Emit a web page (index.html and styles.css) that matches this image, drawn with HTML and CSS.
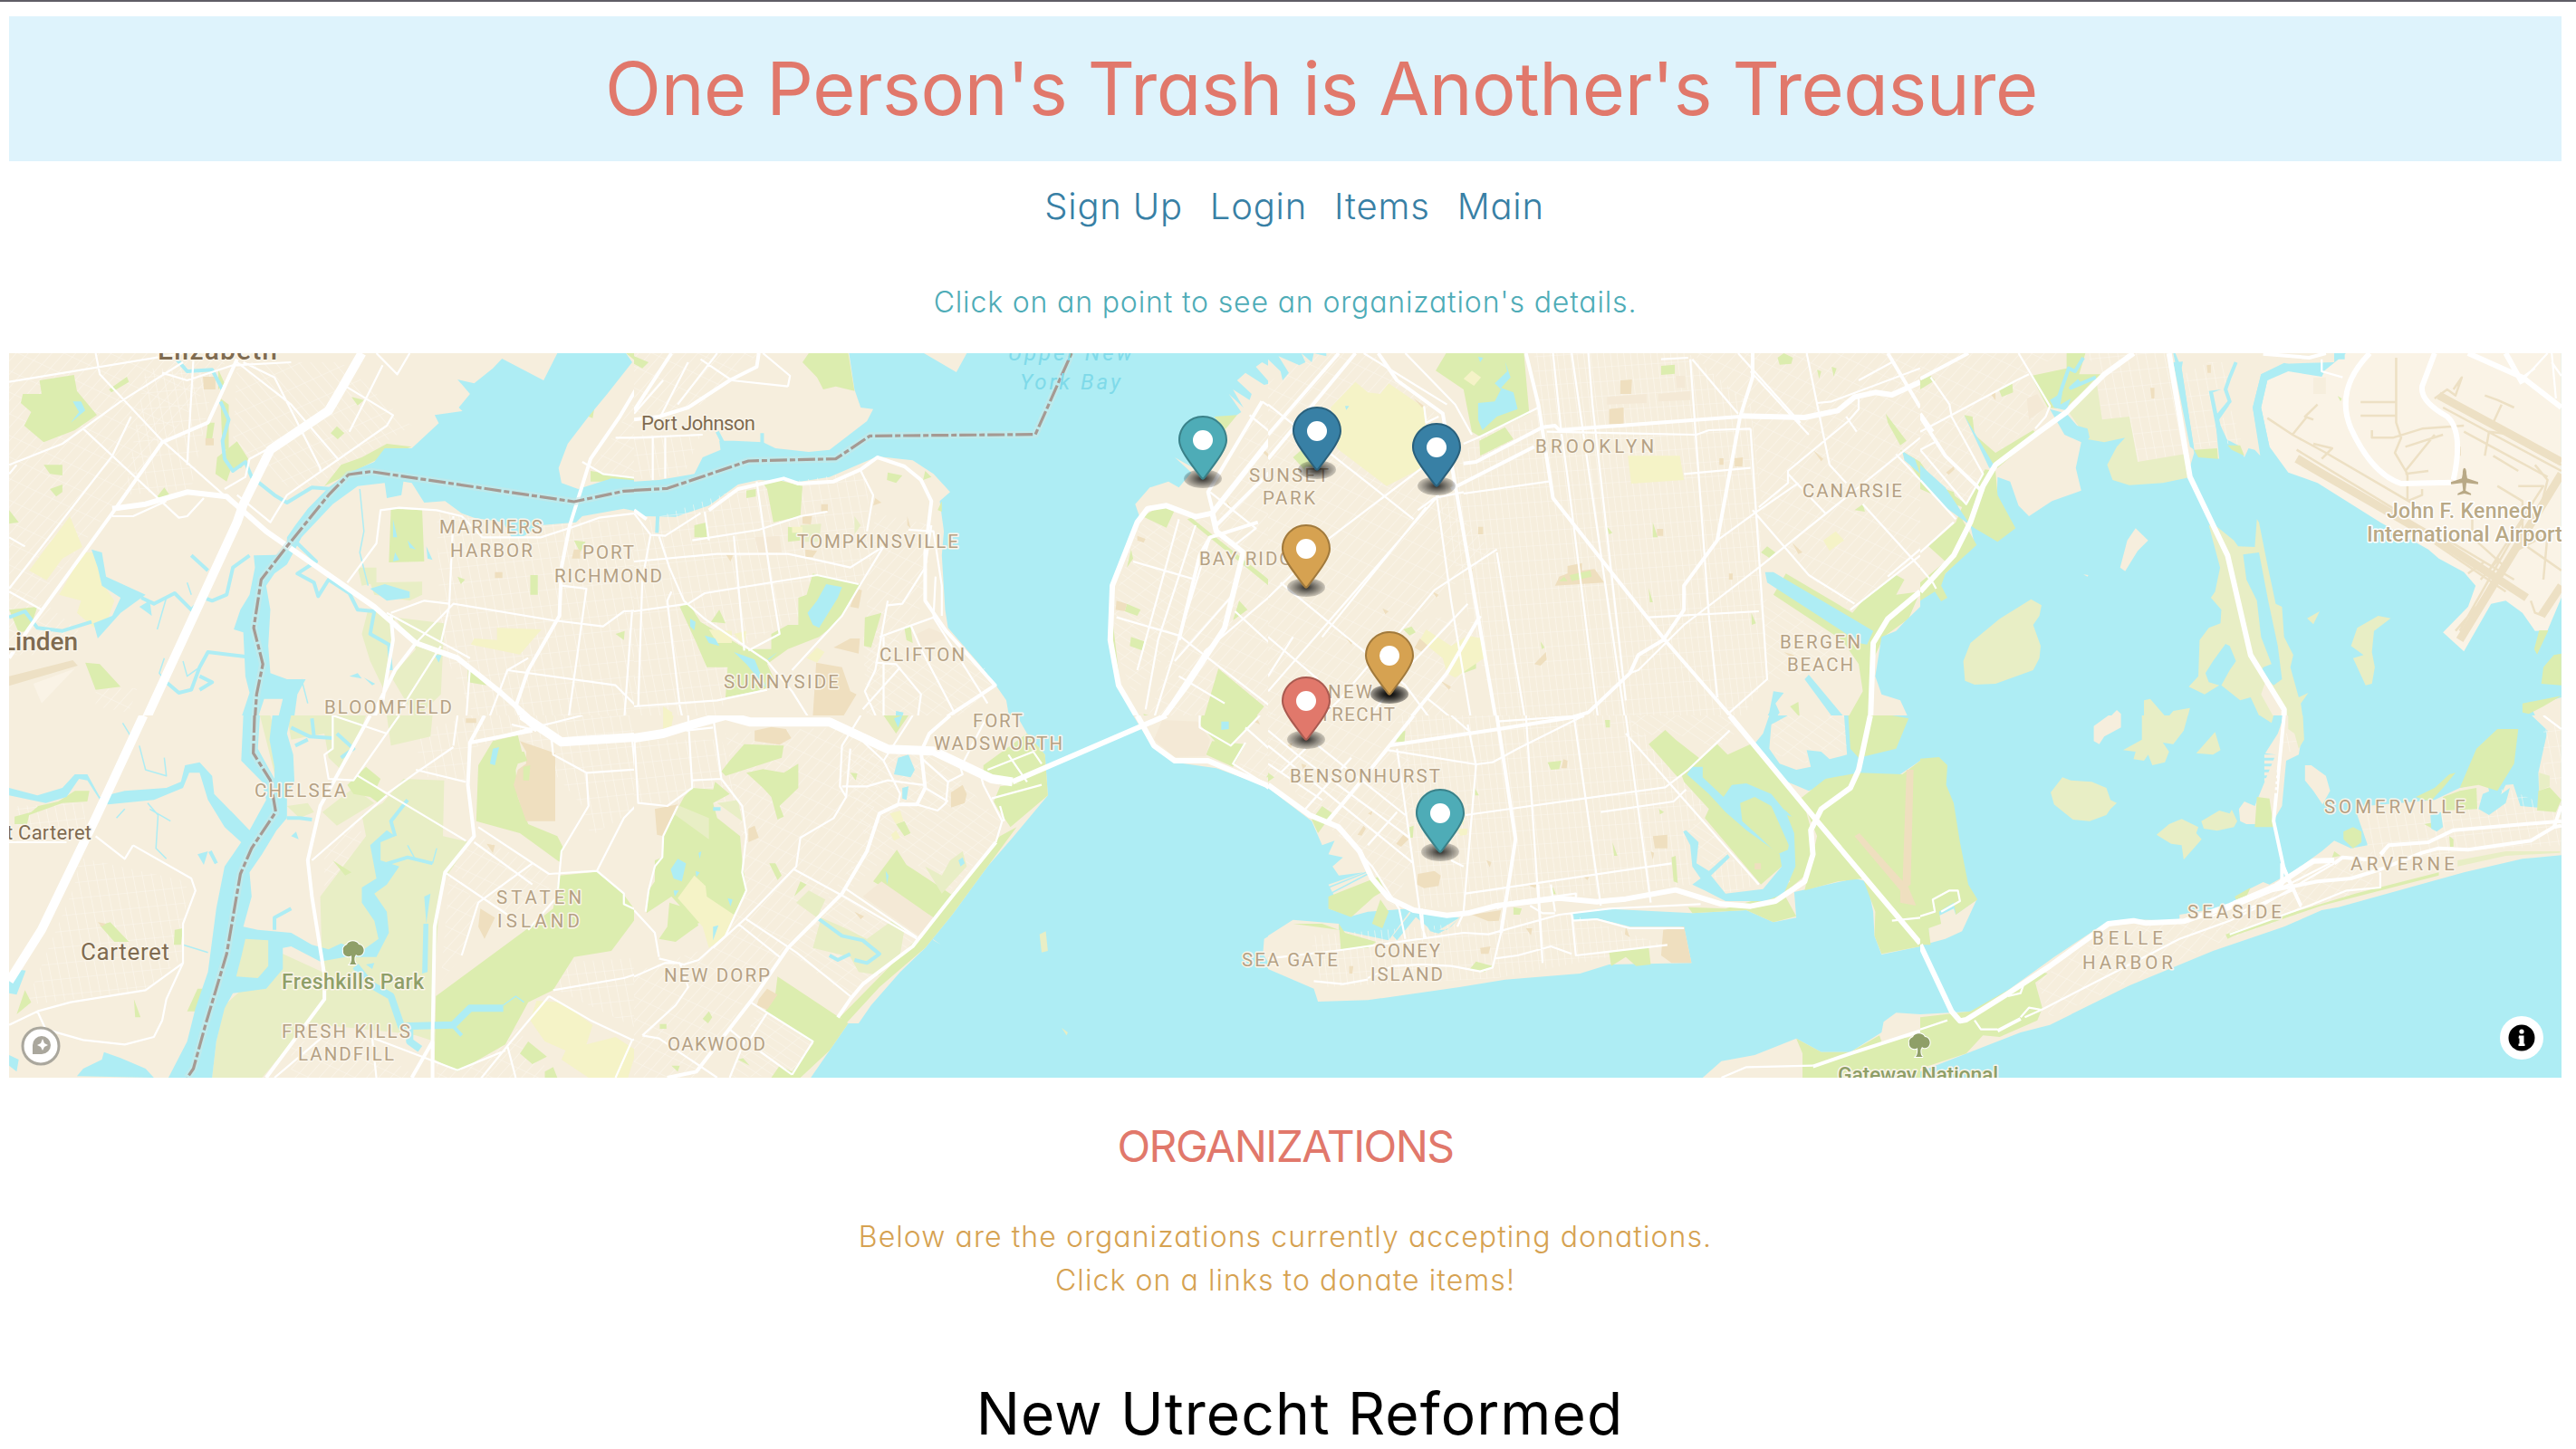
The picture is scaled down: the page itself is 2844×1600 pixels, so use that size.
FILE: index.html
```html
<!DOCTYPE html>
<html lang="en">
<head>
<meta charset="utf-8">
<title>One Person's Trash is Another's Treasure</title>
<link rel="stylesheet" href="styles.css">
</head>
<body>
<header class="banner"><h1>One Person's Trash is Another's Treasure</h1></header>
<nav class="nav"><a>Sign Up</a><a>Login</a><a>Items</a><a>Main</a></nav>
<p class="hint">Click on an point to see an organization's details.</p>
<main>
<svg class="map" viewBox="10 390 2818 800" role="img" aria-label="Map of organizations">
<defs>
<pattern id="sa" width="22" height="52" patternUnits="userSpaceOnUse" patternTransform="rotate(-8)"><path class="st" d="M0 0H22M0 0V52"/></pattern>
<pattern id="sb" width="24" height="60" patternUnits="userSpaceOnUse" patternTransform="rotate(33)"><path class="st" d="M0 0H24M0 0V60"/></pattern>
<pattern id="sc" width="16" height="48" patternUnits="userSpaceOnUse" patternTransform="rotate(-5)"><path class="st" d="M0 0H16M0 0V48"/></pattern>
<pattern id="sd" width="56" height="22" patternUnits="userSpaceOnUse" patternTransform="rotate(42)"><path class="st" d="M0 0H56M0 0V22"/></pattern>
<pattern id="se" width="24" height="62" patternUnits="userSpaceOnUse" patternTransform="rotate(-32)"><path class="st" d="M0 0H24M0 0V62"/></pattern>
<radialGradient id="shade"><stop offset="10%" stop-opacity=".75"/><stop offset="100%" stop-opacity=".18"/></radialGradient>
<symbol id="pin" viewBox="0 0 27 41">
<ellipse cx="13.5" cy="34.8" rx="10.5" ry="5.25" fill="url(#shade)"/>
<path fill="currentColor" d="M27 13.5C27 19.07 20.25 27 14.75 34.5C14.02 35.5 12.98 35.5 12.25 34.5C6.75 27 0 19.22 0 13.5C0 6.04 6.04 0 13.5 0C20.96 0 27 6.04 27 13.5Z"/>
<path fill="none" stroke="#000" stroke-opacity=".25" d="M26.5 13.5C26.5 18.8 20 26.5 14.35 34.2C13.9 34.9 13.1 34.9 12.65 34.2C7 26.5 .5 19 .5 13.5A13 13 0 0 1 26.5 13.5Z"/>
<circle cx="13.5" cy="13.5" r="5.5" fill="#fff"/>
</symbol>
<symbol id="tree" viewBox="0 0 26 28"><path stroke="#fff" stroke-width="2" paint-order="stroke" d="M9 27C11 25 11.500 21 11 17C8 20 1 17 2 12C1 8 4 6 6 5C8 0 17 0 19 5C23 5 26 10 24 14C22 18 18 18 16 16L14.500 19C14 23 15 26 17 27Z"/></symbol>
</defs>

<!-- Elizabeth and Mariners Harbor -->
<svg x="0" y="380" width="720" height="420" viewBox="0 0 1568 1260" preserveAspectRatio="none">
<path class="land" d="M0 0H1568V1260H0Z"/>
<path fill="url(#sb)" d="M22 30H560L400 320 270 540 22 960Z"/><path fill="url(#sa)" d="M350 80H520L460 480 300 500Z"/>
<path fill="url(#se)" d="M570 60L820 60 990 270 720 500 560 330Z"/><path fill="url(#sa)" d="M1050 560L1568 590V1260H1150L1060 1000Z"/><path fill="url(#sb)" d="M1568 100V440L1420 420ZM22 880L110 860 200 960 100 1030 22 1030ZM230 1140H330L310 1220 230 1200Z"/>
<path class="air" d="M80 1125L180 1075 100 1190Z"/><path class="run" d="M22 1100L175 1047 187 1065 22 1132Z"/>
<path class="yel" d="M168 570L198 672 150 710 112 782 70 750ZM200 690L235 690 245 790 275 850 255 930 225 938 185 890 195 850 142 830ZM1195 940L1302 945 1250 1028 1132 995 1140 975 1195 980Z"/>
<path class="park" d="M95 120L178 102 185 155 233 235 180 285 105 325 58 270 75 225 50 195 55 165 100 165ZM262 150L305 108 310 125 268 160ZM105 400L150 400 150 435 120 430ZM120 480L150 465 150 490 135 505ZM375 510L395 475 410 505ZM845 175L875 185 860 203ZM795 295L810 272 828 295 812 315ZM570 322L597 380 580 410 555 415 545 455 518 430 522 375ZM940 545L1015 550 1020 720 935 723ZM990 340L930 330 870 375 820 400 780 470 840 430 910 380ZM1420 455V420L1568 455ZM1505 30H1568L1550 80ZM205 1055L240 1060 290 1135 230 1145ZM22 880L90 870 70 950 45 955ZM1125 1070L1170 1130 1125 1120ZM1380 650L1408 655 1395 690ZM1275 765H1293V830H1275ZM1100 770L1118 780 1108 795ZM1480 960L1502 950 1500 980ZM1430 205L1415 240 1425 245ZM525 85L540 130 525 150ZM530 180L550 200 550 350 535 350ZM500 260H516L510 315H495ZM22 550L45 590 22 595Z"/>
<path class="wet" d="M860 740L905 740 905 790 870 800ZM890 790L1015 787 1015 830 985 850 900 830ZM885 880L950 900 940 1000 925 1150 890 1050 870 960ZM950 905L1068 925 1060 1160 1000 1240 940 1100 1000 1010ZM1150 455L1185 465 1175 530 1150 525Z"/>
<path class="tan" d="M488 108H518V150H490ZM494 312H514V335H494ZM1380 680H1395V710H1375ZM1190 755H1208V775H1190Z"/>
<path class="water" d="M1340 30L1307 120 1207 48 1185 80 1140 130 1100 117 1130 165 1103 210 1112 222 1045 235 1055 262 990 345 925 345 900 390 840 425 790 475 740 545 710 600 690 640 690 670 665 698 610 700 613 740 600 830 578 880 562 945 585 955 590 1100 600 1155 582 1230V1260H615L635 1175H680L665 1260H705L715 1160 735 1110 690 1110 650 1090 645 1000 650 880 640 800 660 760 690 730 725 640 800 530 860 470 925 460 930 510 965 500 970 455 990 460 1020 525 1070 520 1110 560 1140 575 1210 590 1230 640 1260 635 1300 600 1385 590 1400 570 1500 545 1568 565V455L1470 445 1390 480 1350 460 1343 410 1365 330 1415 240 1460 165 1520 60 1505 30ZM220 680L245 690 255 770 350 830 290 890 235 975 225 925 270 900 290 840 245 800 235 740ZM335 870L360 850 365 900ZM175 190H195L205 220 170 260 190 225ZM890 810L925 795 985 820 985 840 930 850ZM945 580L955 640 945 640ZM950 690L960 715 945 720ZM980 650L1000 680 985 675ZM1025 670L1040 715 1028 710ZM840 1100L860 1090 870 1108ZM875 1105L902 1125 895 1130ZM1045 1030L1062 1030 1055 1055Z"/>
<path class="creek" d="M425 50L450 90 510 85 535 150M530 190L550 250 535 320 540 380 560 420 590 390 605 440 660 500 690 525 750 475 800 480M22 905L60 885 90 940 150 950 220 920M600 700L560 740 545 830 510 850 490 840 460 880 420 825 370 860 340 840M590 1035L500 1020 480 1070 460 1145 430 1155 400 1120M480 1100L510 1120 480 1145M715 660L760 720 715 760 755 790 765 835 790 780 840 825 860 880 900 885 890 960 935 995 940 1080M500 750L460 700"/>
<path class="thin" d="M865 480L875 620 865 690 885 800M400 840L378 945M450 790L460 830M725 1110L740 1190M400 1120L383 1090 395 1040M440 1050L450 1100 475 1075"/>
<path class="rd" d="M22 125L440 30M22 400L150 330 290 190 440 60M230 30L240 100 390 320 555 520M40 400L22 430M315 240L270 370 22 810M200 280L430 575 450 570 490 510M570 60L700 200 815 385M585 60L660 110 770 410 770 420M820 130L945 235 930 270 690 500 650 590 570 500M985 30L955 100 905 30M920 70L840 290M465 50L450 400M390 95L450 120 560 70 700 60M22 640L60 670M22 820L100 880M640 350L600 380 590 440 540 480M1000 990L1090 860 1330 915 1450 935 1500 885 1568 880M835 790L905 660 915 550 960 542 1050 550 1110 570 1160 640 1300 640 1390 600 1440 575 1530 560 1568 600M1090 570L1080 870 1060 990M1060 1000L940 1260M930 890L1130 1040M1130 1070L1120 1260M1220 1080L1480 1130 1530 1200M1350 800L1410 810 1365 1260M1500 1260L1520 880M940 890L1020 850 1080 860M1270 1040L1220 1080 1170 1260M270 570L320 570 400 520M1480 310H1568M1400 390L1450 430 1568 450"/>
<path class="maj" d="M570 50L500 260 390 325 270 560 70 940 22 1040M1568 60L1490 240 1420 380 1370 600 1350 740 1345 900 1270 1080 1240 1200 1260 1260M1000 990L950 1080 885 1260M940 900L945 980 920 1180 890 1260"/>
<path class="hw2" d="M270 545L350 530 450 490 545 505 640 620 900 870 1000 990 1100 1040 1200 1150 1290 1260"/>
<path class="hwy" d="M870 30L820 150 790 220 650 350 585 530 570 590 345 1260"/>
<path class="glow" d="M612 1260L617 1160 632 1060 610 940 628 780 690 670 790 500 838 432 892 422 1380 522 1500 487 1568 482"/><path class="bound" d="M612 1260L617 1160 632 1060 610 940 628 780 690 670 790 500 838 432 892 422 1380 522 1500 487 1568 482"/>
</svg>

<!-- Upper New York Bay -->
<svg x="700" y="380" width="720" height="420" viewBox="0 0 1568 1260" preserveAspectRatio="none">
<path class="water" d="M0 0H1568V1260H0Z"/>
<path class="land" d="M0 30H517L530 150 545 210 575 215 560 255 470 350 420 357 340 345 310 325 240 320 205 320 208 350 165 375 145 430 60 450 0 455ZM697 30L775 93 800 30ZM0 550L25 570 100 572 180 535 250 465 300 450 400 455 470 440 585 372 670 385 720 430 760 490 735 520 745 620 740 700 748 880 755 940 830 1060 870 1130 895 1180 905 1260H0ZM1568 30H1545L1568 90 1555 95 1510 60 1495 75 1530 130 1515 135 1470 95 1450 120 1485 165 1480 185 1440 150 1465 210 1430 165 1460 225 1400 280 1340 330 1370 430 1300 375 1340 425 1310 475 1285 455 1240 475 1205 530 1215 570 1200 640 1165 740 1145 850 1143 1000 1160 1130 1220 1260H1568Z"/>
<path fill="url(#sb)" d="M0 30H300L160 200 0 240ZM580 560L715 600 700 850 560 1150 560 800ZM1480 260L1568 180V1260H1230L1410 560Z"/><path fill="url(#sa)" d="M0 300H160L120 430 0 450ZM0 600L250 480 560 420 570 760 400 900 260 1000 200 1260H0Z"/><path fill="url(#sd)" d="M1210 600L1390 580 1300 1000 1200 1160 1155 1000 1155 850ZM550 950L840 1060 860 1140 760 1260 560 1260Z"/>
<path class="park" d="M420 30H515L530 155 485 140 455 150 440 110 405 60ZM308 455L345 450 405 470 400 570 335 590 320 480ZM0 40L35 60 20 80 0 65ZM370 605L400 610 400 650 370 655ZM430 760L545 795 490 920 445 970 370 1010 320 1060 340 1120 310 1145 220 1170 225 1070 175 1070 150 990 110 870 130 855 160 920 270 1010 330 1010 330 960 370 930 395 930 395 840 415 830ZM185 920L205 880 220 925ZM555 905L595 890 570 1005 553 1000ZM610 425L645 435 630 460 608 450ZM270 485L293 480V505L270 510ZM145 600L175 590 175 640 145 640ZM1222 570L1270 535 1300 550 1280 608ZM1405 1075L1515 1200 1480 1260H1365ZM1330 580L1340 575 1540 795 1530 805ZM1455 850L1475 880 1440 915ZM1195 970L1227 985 1222 1015 1192 1000ZM1195 680L1200 710 1185 740ZM1145 850L1160 1130 1225 1250 1170 1140ZM1185 860L1218 880 1210 900 1180 885ZM1395 240L1450 235 1420 285ZM1225 1225L1260 1240 1230 1260ZM700 420L715 440 695 450ZM740 520V555L730 550ZM650 940L665 935 670 990 655 980Z"/>
<path class="wet" d="M400 600L450 595 445 655 405 655ZM530 570L545 600 530 630Z"/>
<path class="yel" d="M180 945L235 950 235 990 200 990ZM240 960L270 950 265 1000ZM415 1040L440 1005 458 1020 440 1055ZM70 1200L92 1220 90 1260H70ZM380 605H405V625H380Z"/>
<path class="tan" d="M438 1055L500 1070 520 1150 535 1160 500 1240 430 1230ZM520 975L543 975 540 1025 480 1005ZM535 810L548 815 540 875 520 870ZM405 570H428L425 597 405 595ZM412 680L440 685 430 705 412 705ZM1160 850L1185 860 1180 885 1158 880ZM1515 350L1530 370 1525 375 1513 360ZM1425 520L1435 540 1430 545ZM580 510L595 525 575 535ZM657 570L665 610 657 600ZM220 695L238 700 232 720ZM1210 635L1230 645 1225 658 1210 650ZM450 530H466V553H450Z"/>
<path class="blk" d="M680 960L710 940 745 960 750 975 690 1005ZM290 640L350 635 355 690 300 690Z"/>
<path class="water" d="M462 795L500 805 490 840 445 940 430 930 417 890 440 850ZM135 910L148 920 145 948 135 935ZM170 965L195 975 205 1000 180 990ZM240 1020L290 1045 305 1095 318 1140 300 1110 270 1060ZM320 1045L345 1020 325 1045ZM630 1215L648 1220 640 1260 628 1250Z"/><path class="creek" d="M57 565L55 625M200 290L215 330M308 295V330"/>
<path class="rd" d="M160 50L235 120 370 140M310 30L375 105 370 140M105 200L200 30M60 250L130 60M0 230L70 120M0 310L165 300M45 310V450M75 310V445M0 560L40 632 75 635 160 560M60 635L85 740 120 850 170 910 320 1050 380 1150 430 1260M170 555L180 650M140 650L300 615 400 570 465 555M295 455L330 790 350 960 275 1015M240 635L265 1015M0 720L200 695 370 695 440 715 520 740 600 670M0 885L130 860 170 825 440 765 540 795M545 420L575 500 560 620M600 670L545 795 500 900 380 1080M660 615L720 620 740 800 740 900M610 865L645 860 700 740 715 600M610 850L580 1080 555 1150 590 1260M590 970L720 905M725 770L720 905 800 1080 850 1190M580 1055L630 1060 690 1160 680 1260M665 930L690 1010 770 1220M90 820L80 850 110 1200 120 1260M0 1200L200 1180 320 1145M600 970L600 1260M640 1070L550 1210M1385 490L1495 610 1440 670M1200 720L1350 780M1160 905L1310 965 1568 1240M1310 580L1210 1080M1350 600L1260 980 1230 1210M1385 640L1250 1240M1440 830L1300 1050M1480 235L1568 335M1510 190L1568 245M1568 790L1370 1020M1445 885L1568 1040M1310 1100L1420 1190M40 630L20 780 10 1200"/>
<path class="maj" d="M90 30L0 220M300 30L295 75 230 120 130 210 60 240 0 250M0 550L30 580M180 550L250 480 360 445 395 462 480 455 545 415 585 375 650 405 690 450 715 520 700 690 700 850 750 950 790 1010 868 1130 725 1260M1510 190L1380 490 1400 600M1568 370L1400 600M1500 590L1385 640 1360 700 1310 980M1260 1260L1380 1010"/>
<path class="hw2" d="M1568 250L1390 560 1350 572 1280 535 1235 545 1210 590 1150 800 1145 980 1165 1130 1220 1260M1390 560L1400 620 1465 690 1420 940 1330 1130 1270 1240 1225 1260M130 1260L210 1240 330 1260"/>
<path class="glow" d="M0 484L80 478 275 387 485 380 567 304 965 299 1052 30"/><path class="bound" d="M0 484L80 478 275 387 485 380 567 304 965 299 1052 30"/>
</svg>

<!-- Brooklyn -->
<svg x="1400" y="380" width="720" height="420" viewBox="0 0 1568 1260" preserveAspectRatio="none">
<path class="land" d="M0 0H1568V1260H0Z"/>
<path fill="url(#sb)" d="M0 130L90 30H250L400 220 350 450 420 500 540 690 340 920 440 900 520 1000 400 1260H0Z"/><path fill="url(#sc)" d="M640 30H1010L1160 200 1180 450 1195 1110 1130 1260H550L410 510 500 300 640 250Z"/><path fill="url(#sb)" d="M1020 30H1568V700L1400 870 1300 770 1190 560 1160 220Z"/><path fill="url(#sd)" d="M1190 840L1350 960 1400 1050 1290 1090 1200 1120Z"/>
<path class="park" d="M428 30H615L628 230 510 307 490 290 470 150 403 88ZM508 320L570 275 590 315 510 370ZM1245 760L1405 890 1430 850 1510 765 1530 780 1510 830 1568 820 1540 910 1480 970 1450 1060 1455 1260H1385L1430 1150 1420 1060 1380 980 1215 830ZM1225 45L1240 30 1262 45 1258 65 1230 68ZM945 72L978 68V98L945 102ZM1485 230L1535 320 1520 335 1490 260ZM1520 350L1568 390V450ZM60 375L80 350 130 410 90 420ZM470 1050L500 1040V1075L470 1090ZM925 590L937 640H925ZM815 605L828 625 820 630ZM1185 690L1200 670 1220 690 1205 708ZM915 808L925 855H918ZM325 945L345 935 355 955 340 965ZM1162 890L1173 925 1163 930ZM1410 550L1430 530 1435 555ZM655 985L665 1005 658 1010ZM1320 85L1330 90 1325 115ZM1355 75L1367 80 1360 107ZM1255 1200L1275 1185 1278 1235Z"/>
<path class="yel" d="M210 125L240 160 270 165 290 130 375 210 385 400 285 470 165 345 170 300 150 210ZM865 370L990 370 1000 450 873 462ZM490 88L512 110 495 138 470 115ZM380 945L440 1000 480 965 515 975 525 1035 450 1105 430 1090 420 1040 365 980ZM1335 650L1365 620 1385 650 1350 685Z"/>
<path class="tan" d="M847 120L875 117 873 165 847 165ZM820 215L855 210 855 265H820ZM690 800L700 770 720 760 720 735 755 725 755 750 785 745 808 790ZM1122 378L1142 375 1140 405H1122ZM1085 378H1095V400H1085ZM505 605H517V630H505ZM935 612H950V635H935ZM365 975L385 1000 370 1020 352 1005ZM640 1060L668 1020 670 1045 655 1065ZM1310 350L1335 380 1330 388ZM1260 658L1285 690 1275 695ZM1108 760H1117V780H1108ZM480 750L492 745 488 762ZM395 820L410 830 405 840ZM275 875L290 885 282 895ZM185 970L205 985 200 995ZM415 1115L440 1135 435 1145ZM1240 1020L1265 1030 1260 1040ZM800 1230H820V1260H800ZM350 180L375 205 370 210Z"/>
<path class="blk" d="M815 175L910 165V195L815 200ZM938 165L1015 155V185L938 190ZM980 105H1003V145H983Z"/><path class="park" d="M725 765L775 750 778 770 730 785ZM700 785L712 770 720 785Z"/>
<path class="water" d="M0 50L30 90 35 120 50 95 25 40 75 70 90 60 80 30 105 60 110 30 140 40V30H0ZM505 195L545 190 560 150 545 130 575 90 570 58 583 110 560 145 590 160 600 215 550 240 515 285 505 250ZM1195 755L1215 755 1455 950 1440 995 1420 990 1380 950 1200 790ZM1568 870L1530 920 1510 950 1475 970 1460 1100 1475 1160 1520 1180 1540 1240 1568 1260ZM1300 1095L1400 1260H1370L1290 1110ZM1215 1150L1240 1155 1220 1190 1230 1220 1210 1260H1190L1205 1220ZM1525 355L1555 380 1568 430 1530 385ZM505 42L517 45 510 60ZM185 205L195 205 188 218Z"/>
<path class="rd" d="M685 30L705 290 720 440 795 1260M730 30L790 600 860 1260M770 30L780 200 860 1180M1015 50L1060 900 1080 1170M1160 280L1200 1110 1110 1220M670 290L1030 300 1060 285 1160 280M1000 430L1160 410M470 495L675 455M915 905L1180 885M360 550L400 510 470 490M1020 50L1130 230M1568 80L1355 190 1320 195M1295 30L1350 400 1390 460M1130 30L1280 260M1160 90L1300 300M1420 180V215L1395 255 1250 420 1250 460 1180 540M1275 460L1170 560 1080 650M1568 310L1180 740 1000 930 890 1080 870 1090M1250 430L1340 560M1165 550L1300 765 1410 860M1430 530L1568 740M1568 700L1400 880M1568 680L1490 770M1390 240L1415 290M0 200L350 580M410 500L0 1150M370 410L150 640 0 840M550 680L400 815 300 980M380 540L130 970M30 790L330 1130 400 1260M0 970L120 1110M300 970L170 1180 110 1260M480 860L330 1080 230 1260M550 690L620 1260M405 500L440 850 490 1260M375 205L380 260 410 240M230 30L430 200M330 30L450 200 490 300M1510 365L1568 450M650 210L505 310 470 330M945 50L1010 45M1500 60L1420 120M380 1170L460 1260M0 1100L60 970"/>
<path class="maj" d="M0 380L210 30M0 300L170 30M265 30L310 120 420 230 550 1260M470 395L500 390 660 275 690 270 700 285 1135 240M620 30L650 200 685 510 960 990 1130 1260M1165 30V110L1135 240 1080 650 1000 800V880L950 980 890 1030 870 1090 770 1220 720 1240 610 1260M440 480L640 340M510 900L430 1090 330 1260M1490 30L1568 210"/>
<path class="hw2" d="M1135 238L1290 243 1370 220 1410 175 1460 160 1500 168 1568 125M1568 820L1490 910 1455 990 1448 1260"/>
</svg>

<!-- Jamaica Bay and JFK -->
<svg x="2120" y="380" width="724" height="420" viewBox="0 0 1568 1260" preserveAspectRatio="none">
<path class="water" d="M0 0H1568V1260H0Z"/>
<path class="land" d="M0 30H605L655 360 640 430 500 450 500 280 440 270 390 315 350 230 310 215 345 300 385 325 372 410 385 485 315 520 260 570 235 535 215 455 185 440 180 640 120 600 130 665 60 760 50 790 0 850ZM610 30H990V60L870 65 815 100 795 210 813 370 800 350 785 345 775 375 760 335 725 310 715 250 740 200 705 240 715 380 655 350 625 80ZM515 610L545 650 520 685 490 752 478 740 495 650ZM410 1260H480V1225L470 1212 440 1255ZM1460 1200L1533 1170V1260H1480ZM390 763L402 765 400 770Z"/>
<path fill="url(#sb)" d="M0 30H340L250 100 300 210 200 350 120 240 140 480 90 570 0 440Z"/><path fill="url(#sa)" d="M390 30H590L635 365 520 390 500 240 437 250 420 120 440 100ZM630 100L690 60 740 60 735 140 690 155 710 330 660 350ZM710 260L745 220 770 330 730 330Z"/>
<path class="air" d="M1533 30H1018L960 95 870 85 830 120 815 210 835 340 880 425 950 460 1100 590 1215 680 1240 710 1300 755 1328 800 1310 870 1250 955 1300 1018 1365 860 1400 850 1440 890 1470 950 1500 948 1533 840Z"/>
<path class="park" d="M350 30H395L380 100 435 100 345 215 305 210 265 105 350 80ZM0 390L40 470 80 490 95 560 60 480 110 530 155 415 180 420 185 500 228 610 185 655 130 610 100 580 135 665 60 760 50 800 65 840 50 852 35 820 0 850V790L60 720 20 670 85 590 100 540 0 480ZM105 235L125 240 130 300 180 360 270 285 280 300 185 410 165 400ZM0 120L25 105 35 120 0 150ZM188 150L220 130 222 160 195 175ZM655 350L710 345 712 380 665 375ZM735 335L765 335 775 370 745 350ZM1480 948H1502L1475 1028 1468 1010ZM1533 1025V1130L1485 1125 1490 1070 1515 1030ZM1440 1190L1533 1165 1490 1200 1455 1225 1440 1220ZM998 172L1008 180 1005 190Z"/>
<path class="wet" d="M420 110L435 250 500 240 520 390 640 362 648 440 580 460 500 467 460 450 447 400 470 340 490 310 440 325 400 315 350 215ZM265 845L290 865 285 900 270 930 288 1000 285 1040 270 1080 180 1125 130 1128 107 1115 103 1050 120 990 190 910ZM690 600L710 605 750 650 760 670 800 672 805 580 810 590 830 730 850 860 865 870 870 970 892 1030 885 1070 905 1170 928 1155 910 1190 917 1260H820L790 1170 765 1180 720 1130 740 1080 755 1050 740 1000 730 993 700 1050 682 1090 690 1120 715 1130 680 1160 642 1135 665 1100 668 980 690 940 718 925 720 880 695 840 705 820 717 740ZM925 908L955 885 940 928ZM1095 900L1125 908 1085 950 1080 1020 1087 1070 1080 1125 1065 1130 1035 1040 1060 1030 1030 1000 1045 940ZM535 1260V1180L550 1175 590 1240 605 1215 645 1205 635 1260Z"/>
<path class="water" d="M772 697L780 780 805 850 815 970 840 1060 820 1070 815 1090 845 1130 865 1110 855 1000 832 850 810 690Z"/>
<path class="blk" d="M255 180L280 165 300 210 260 250Z"/><path class="land" d="M825 1120L850 1160 880 1260H855L815 1160ZM940 110H970V165H940Z"/>
<path class="tan" d="M550 145H560V180H553ZM685 70L695 68V95H687ZM168 165L180 160V185ZM62 425L80 405 82 415 68 433Z"/>
<path class="water" d="M605 60L628 58 625 80 655 350 645 340ZM870 62L965 95 960 108 880 90 830 120 815 210 835 340 815 370 795 210 815 100ZM990 30H1015V50H990ZM310 185L340 160 335 200 360 180 350 220 320 210ZM350 230L375 270 400 280 405 310 390 330 370 300ZM0 400L60 475 120 600 50 530 0 450ZM105 235L180 410 165 410ZM690 155L720 150 700 160 715 260 735 320 715 330Z"/>
<path class="creek" d="M390 45L370 90 355 80 330 180M420 110L360 145 380 120M755 60L740 110 730 150 740 190 710 240"/>
<path class="apr" d="M1138 45V260L1150 310 1135 360 1165 430 1165 520M1053 192H1138M1053 237H1138M1080 285V310H1130L1200 280 1300 270M1160 340L1250 300M830 245L890 300 970 360 1180 530M925 240L890 300M950 200L920 240 940 250M900 350L1150 560M940 330L985 345 960 380M905 370L1400 800M1230 180L1260 150 1280 170 1295 110 1275 150M1250 210L1533 420M1310 230L1533 400M1350 170L1380 185 1420 210M1390 200L1370 260M1300 290L1500 440M1350 370L1360 290 1420 300M1470 400L1500 450 1480 560M1320 560V640L1400 740M1380 470L1440 520V620M1430 470H1490L1360 750M1290 950L1450 560M1250 640L1420 780M1230 660L1400 820M1310 760L1350 720M1340 780L1385 710M1440 660L1533 750M1430 680L1500 630 1490 780M1280 950L1330 870M1460 850L1470 890 1490 900M1215 420L1160 430M1200 480V500L1165 520M1430 420L1370 370M1290 340V370M1230 300L1160 420"/>
<path class="run2" d="M1240 170L1533 390M900 380L1250 660 1450 840M1533 430L1290 980M1533 800L1485 900"/>
<path class="rd" d="M0 290L230 120 260 100M235 30L310 205 300 240 275 280M25 110L70 200 75 240 150 430 110 530 0 350 35 325M0 690L80 590M0 450L85 580M0 740L30 790 38 810M960 50V90L1010 110M1470 80L1430 120M1510 60L1533 105M1510 30L1520 180M1440 120L1500 30"/>
<path class="maj" d="M0 115L115 30M0 240L60 370 150 490M820 32L930 45 970 30M0 230L30 290"/>
<path class="hw2" d="M0 820L80 700 120 590 150 470 180 400 280 295 350 225 440 100 510 30M595 30L645 440 735 700 790 1030 870 1210V1260M1075 30Q990 150 1030 280Q1080 430 1150 462L1270 458M1230 30L1200 140Q1195 190 1260 240 1300 290 1275 450M1310 30L1440 110 1533 210M1400 30L1440 130"/>
<path class="plane" d="M1301 410Q1306 411 1306 430L1308 445 1334 457V464L1306 460 1304 485 1317 495V500L1301 495 1285 500V495L1298 485 1296 460 1269 464V457L1295 445 1297 430Q1297 411 1301 410Z"/>
</svg>

<!-- Carteret and Freshkills -->
<svg x="0" y="790" width="720" height="410" viewBox="0 0 1568 1230" preserveAspectRatio="none">
<path class="land" d="M0 0H1568V1230H0Z"/>
<path fill="url(#sa)" d="M190 470L450 550 440 800 350 910 60 960 180 560ZM40 300L200 290 210 400 40 420ZM1000 60L1130 0H1568V280L1420 400 1400 300 1250 60 1130 110 1120 220 1010 200ZM1330 820L1568 800V1060L1340 910Z"/><path fill="url(#sb)" d="M780 450L850 360 880 400 780 580ZM1080 500L1150 400 1330 530 1300 640 1200 650ZM1060 880L1080 530 1150 620 1110 800ZM1050 1100L1240 1030 1330 1200H1050ZM700 1080L880 1070 1000 1200H700Z"/>
<path class="wet" d="M625 0H650L680 150 665 220ZM690 0H880L860 80 820 180 790 140 780 60 700 80ZM930 0H1040L1035 70 940 100ZM970 210L1068 215 1065 400 1130 420 1060 560 1045 850V1080L1000 1060 950 1050 740 1020 630 1200H510L520 1080 540 960 580 910 640 890 680 790 775 850 770 600 880 400 870 330 920 290ZM690 300L740 290 755 320 720 340ZM775 320L850 240 900 290 810 365Z"/>
<path class="park" d="M1185 85L1245 65 1255 120 1240 180 1245 270 1270 360 1340 400 1355 440 1345 485 1280 420 1250 390 1145 350 1150 165ZM1345 530L1435 518 1498 590 1535 660 1470 780 1380 800 1330 910 1270 950 1215 1090 1100 1180 1045 1140 1048 930 1260 715 1330 640ZM835 230L880 170 915 210 905 240 930 265 910 290 890 270 850 260ZM92 300L140 285 180 250 215 250 210 285 150 290 70 330 65 360H35V335L75 320ZM240 695L265 685 310 750 275 750ZM420 710L440 705 435 760H418ZM475 905L492 905 480 980 450 980ZM1250 1120L1270 1080 1315 1130 1280 1155ZM800 480L845 520 830 530ZM322 940L338 1000 325 1000ZM60 910L75 950 40 990ZM1310 1180L1330 1165 1340 1200H1310Z"/>
<path class="yel" d="M1290 945L1350 950 1425 1025 1410 1090 1480 1065 1530 1110 1510 1200H1415L1350 1140 1360 1110 1310 1080 1275 1010Z"/>
<path class="tan" d="M1250 85L1335 125V350H1265L1235 230 1245 180 1265 160 1265 120ZM1155 640L1190 670 1165 740 1150 700ZM235 685L255 690 245 700ZM1170 425L1190 430 1185 455ZM1120 10H1145V25H1120Z"/>
<path class="park" d="M1240 120L1260 120 1268 150 1245 160ZM1258 170L1275 165 1272 215 1258 215Z"/>
<path class="water" d="M585 0H625L620 110 660 210 660 170 648 80 655 0H700L690 60 705 130 708 220 690 260 690 340 665 380 630 460 600 520 605 600 585 700 620 710 700 720 750 760 790 775 820 755 870 780 910 740 900 680 870 620 870 570 905 540 890 430 930 380 950 400 915 420 915 480 960 500 930 560 900 590 930 650 935 720 905 800 830 800 770 815 700 765 680 770 680 840 640 905 560 920 540 970 520 1080 510 1200H405L450 1080 470 970 500 850 520 640 540 500 580 420 540 370 500 280 480 190 455 190 440 240 370 280 260 295 240 280 210 215 190 210 160 270 110 290 22 265V240L90 265 150 240 180 195 210 195 240 270 300 250 400 240 435 220 445 165 480 155 510 200 515 260 600 380 640 280 630 220 580 150ZM185 1195L200 1170 245 1140 250 1115 290 1135 350 1170 370 1200ZM35 840L62 845 40 925 22 920V870ZM22 1125L45 1140 40 1180 22 1160ZM1185 110L1200 105 1190 165 1178 160ZM475 460L500 450 490 495ZM700 400L712 385 718 410ZM880 825L900 820 895 840ZM1020 600L1035 590 1025 690ZM1018 690H1030L1028 850 1015 855Z"/>
<path class="wet" d="M590 740L645 745 645 830 620 870 568 865 580 800Z"/>
<path class="creek2" d="M855 830L890 890 940 930 965 1030 1090 1025 1130 970 1210 970M985 1040L985 1080 1010 1105"/>
<path class="creek" d="M910 500L980 470 1040 490M950 400L940 350 980 280M520 490L505 450M700 40L745 70 800 75M755 70L750 10M710 100L740 80M810 60L850 110 820 140M690 340L720 340 750 345M660 710V670L700 640M1090 1030L1110 1060"/>
<path class="thin" d="M335 100L350 180 400 200 395 140M295 25L315 70M355 290L380 330 375 440 400 475M360 310L410 350M440 760L500 785M280 340L300 310M1210 960L1240 930 1260 950M1040 490L1050 440M1000 480L980 430"/>
<path class="rd" d="M230 400L300 475 320 430M320 430L460 540 470 580 440 690 440 820 400 940 390 1010 370 1065 300 1090 200 1075 110 1040 90 980 22 1025M440 820L350 910 170 950 90 980M800 0L930 60M800 0V110L780 130 790 210 850 215 960 0M930 265L750 480M860 200L1120 415M930 260L1000 190 1090 105M1000 180L1120 220M1090 100L1100 0M1400 0L1140 90M1325 60L1330 130 1410 190 1415 300 1350 450 1340 600 1270 710M1410 190L1568 175M1520 80L1535 290 1500 340 1435 515 1320 525 1150 370M1435 515L1500 590 1500 625 1568 670M1140 420L1280 560M1070 520L1220 660M1280 490L1150 620 1110 795M1535 290H1568M1330 910L1500 870 1568 840M1320 930L1220 1095 1140 1230M1320 930L1420 1010 1520 1075 1568 1060M1520 1075L1480 1200M1220 1095L1240 1200M895 1070L905 1200M900 1070L1100 1175 1215 1110M780 1060L660 1200M22 420H160M1230 30L1290 50"/>
<path class="maj" d="M890 0L770 300 740 480 750 600 780 860 780 940 640 1200M1250 0L1290 50M1165 0L1130 90 1125 230 1140 400 1070 520 1045 700 1040 1060V1200M1130 90L1280 50M1040 1080L990 1200"/>
<path class="hwy" d="M1255 0L1350 88 1568 68M345 0L230 340 100 710 22 880"/>
<path class="glow" d="M612 0L609 125 650 215 663 320 605 440 578 525 545 790 495 1020 465 1170 450 1200"/><path class="bound" d="M612 0L609 125 650 215 663 320 605 440 578 525 545 790 495 1020 465 1170 450 1200"/>
</svg>

<!-- New Dorp and the Narrows -->
<svg x="700" y="790" width="720" height="410" viewBox="0 0 1568 1230" preserveAspectRatio="none">
<path class="water" d="M0 0H1568V1230H0Z"/>
<path class="land" d="M0 0H920L945 60 988 130 995 265 910 405 850 500 765 660 700 770 640 850 570 960 540 1020 515 1020 470 1110 425 1200V1230H0ZM1200 0H1568V275L1500 225 1400 175 1300 155 1240 90ZM1568 700L1545 715 1515 740 1512 790 1540 850 1568 865ZM718 740L738 760 720 745Z"/>
<path fill="url(#sa)" d="M0 80H210L260 290 0 290Z"/><path fill="url(#sb)" d="M220 60L480 40 600 120 560 440 300 870 150 1200H0V850L180 770 270 500ZM1450 170L1568 20V240Z"/><path fill="url(#sd)" d="M500 130L720 120 880 350 860 430 760 580 630 440 500 600 680 740 520 940 370 780 560 430ZM300 960L430 1080 380 1190 230 1200Z"/>
<path class="park" d="M265 95L360 100 355 140 220 200 210 185 230 150ZM270 190L310 178 360 190 395 160V240L350 300 360 335 345 345 330 270 310 240ZM120 270L140 240 190 245 195 220 230 260 190 290 200 340 255 400 260 480 270 580 240 660 150 690 90 600 30 655 35 580 50 550 50 480 68 470 70 400ZM85 620L130 640 155 695 100 750 60 740 80 700ZM632 445L655 495 765 595 720 670 575 550ZM840 165L945 60 988 130 995 265 905 370 875 310 865 285 880 235 930 225 880 230 840 185ZM345 865L515 1020 470 1110 430 1085 315 980 340 920ZM435 1080L470 1110 400 1200H330L350 1160 380 1180ZM1365 0H1500L1435 100 1400 90 1360 30ZM1390 85L1470 95 1440 170 1375 130ZM920 370L850 500 765 660 700 770 590 900 510 1020 495 1000 680 740 770 580 880 400ZM600 0H660L630 60ZM630 360L650 350 665 390 650 400ZM325 490L340 490 355 530 345 545ZM385 600L400 550 415 560ZM165 1005L180 980 188 1000 178 1020ZM520 190L537 192 533 215ZM250 1140L262 1135 278 1160ZM90 1160L110 1160 105 1180ZM1520 205L1528 190 1540 205ZM62 1022H78V1038H62Z"/>
<path class="wet" d="M90 320L110 300 180 340 180 410ZM200 290L250 280 260 350ZM700 500L740 530 760 480 790 450 800 500 740 590ZM420 580L460 610 440 670 390 620ZM450 670L500 700 560 740 620 680 650 710 640 790 590 860 540 850 520 800 430 770ZM975 725L990 715 995 780 980 785ZM1028 1035L1043 1050 1040 1060Z"/>
<path class="yel" d="M70 0H95L90 35 70 45ZM145 530L172 565 175 600 240 660 220 735 180 770 165 700 105 605ZM615 325L640 315 648 350 630 360ZM618 395L630 380 640 405 625 415Z"/>
<path class="tan" d="M290 50L330 38 365 45 378 75 350 97 290 85ZM50 310L105 295 70 400 55 395ZM762 255L790 230 800 260 795 290 762 305ZM275 375L290 365 300 405 275 420ZM300 940L320 905 345 925 320 975 295 960ZM530 650L553 665 545 675ZM1490 20L1500 15 1505 30Z"/>
<path class="blk" d="M595 550L720 670 685 730 550 600ZM1270 15L1355 20 1385 80 1375 135 1300 138 1250 80Z"/>
<path class="water" d="M635 140L660 130 675 180 665 205 625 195ZM645 240L660 235 655 280 645 275ZM105 475L125 490 115 550 95 540 88 510ZM155 455L162 450 158 475ZM148 515L158 520 150 535ZM605 515L612 530 608 560ZM190 700L203 695 190 745ZM225 605L237 610 232 632ZM95 580L108 580 98 600ZM780 480L790 470 795 490 785 500ZM1412 20L1430 20 1430 45 1412 48ZM625 10L645 0 635 40Z"/>
<path class="creek" d="M445 675L500 730 550 745 590 790 560 820 530 810M470 795L490 810 520 790M190 310H208"/>
<path class="rd" d="M130 0L140 240 80 300 10 290 0 60M190 0L210 210 140 215M210 210L260 300 270 400 260 520 270 580 220 730 155 810 120 825 60 805M125 50L190 40M70 400L68 470 50 500 35 580 28 650M105 300L70 400M0 645L50 720 60 800M0 865L75 820 110 820 130 900 100 960 20 1060M545 0L500 100 495 235 510 270 480 340 400 405 390 500 270 670 190 770M520 110L510 270M500 235L560 235 610 215 695 230M530 60L600 150 640 260 635 290M670 0L600 150M690 140L755 220 750 290 730 315 680 295M700 240L755 285M850 0L790 160M830 180L840 230 885 350 870 420M385 510L505 600 680 740M270 675L390 785 520 930M250 690L350 800M20 1060L60 1070 200 1200M510 575L680 735M280 950L430 1080 380 1190M320 985L280 1070M230 1040L265 1080 230 1200M300 1110L380 1190M755 220L790 195 780 150M1360 0V40L1435 100 1505 0M1470 90L1440 160 1568 270M1470 40L1568 160M880 300L890 350M900 130L945 220M850 180L960 120 980 160M980 230L860 275"/>
<path class="maj" d="M0 80L140 40M760 0L710 60 690 120 700 240 680 295H635L590 325 560 450 500 590 370 770 290 930 150 1180 80 1200M870 420L770 590 670 765 550 890 520 940 490 1000"/>
<path class="hw2" d="M1280 0L910 220M1210 0L1250 100 1300 150 1380 150 1520 230 1568 275"/>
<path class="hwy" d="M0 75L70 60 140 30 220 0 280 22H470L610 112 720 118 860 210 910 220"/>
</svg>

<!-- Bensonhurst and Coney Island -->
<svg x="1400" y="790" width="720" height="410" viewBox="0 0 1568 1230" preserveAspectRatio="none">
<path class="water" d="M0 0H1568V1230H0Z"/>
<path class="land" d="M0 0H1205L1190 60 1160 110 1215 200 1300 250 1400 200 1520 195 1568 150V765L1475 792 1458 730 1455 650 1440 550 1410 540 1265 585 1270 670 1215 685 1150 645 1020 655 800 640 730 655 735 680 790 672 870 700H1000L1018 820 820 825 750 855 570 875 460 900 240 943 120 948 110 905 0 840V730L60 677 170 690 170 710 290 745 340 650 400 720 460 670 340 640 240 650 200 665 145 640 210 575 160 600 145 560 230 520 170 530 155 500 180 470 145 460 160 415 130 430 105 350 0 240ZM1210 30L1250 0H1385L1392 130 1350 145 1330 120 1295 115 1305 170 1270 180 1230 160 1205 110ZM1045 1200L1090 1145 1170 1125 1270 1070 1330 1115 1400 1115 1475 1050 1480 1015 1510 985 1568 990V1230H1045Z"/>
<path fill="url(#sb)" d="M0 0H330L270 110 0 220ZM20 180L340 100 350 480 300 640 240 480 120 340Z"/><path fill="url(#sc)" d="M310 0H870L1050 300 1000 400 1020 560 600 620 370 640ZM100 730L730 660 950 760 900 780 550 870 130 900ZM1065 520L1110 465 1180 560 1100 590Z"/><path fill="url(#sd)" d="M870 0H1110L1130 50 1080 110 960 50 880 80ZM1210 30L1250 0H1385L1392 120 1290 110 1300 160 1220 130ZM1000 400L1040 330 1110 460 1070 510Z"/>
<path class="park" d="M915 95L955 48 980 80 1040 145 985 205ZM995 200L1080 95 1105 130 1160 95 1290 300 1310 400 1300 520 1240 590 1270 665 1215 685 1150 645 1020 655 1010 635 1100 640 1225 590 1255 550 1235 500 1185 560 1050 340 1060 310 1000 220ZM1395 0H1500L1540 10 1510 110 1420 140 1400 110ZM1280 275L1340 210 1420 190 1525 195 1568 150V765L1475 790 1458 730 1460 650 1430 540 1370 550 1290 580 1320 400 1290 300ZM145 600L265 535 280 580 255 600 200 668 145 640ZM250 690L270 610 290 650 275 705ZM170 690L185 720 260 750 240 770 175 775ZM60 690L130 690 170 710ZM105 345L130 300 155 325 120 390ZM820 785L915 765 920 825 885 830 860 800 825 830ZM485 840L500 815 540 830 520 850ZM1285 1200V1120L1270 1070 1330 1115 1400 1115 1470 1060 1475 1080 1568 1060V1200ZM672 155L705 150 700 178 680 180ZM970 470L980 465 985 555 975 550ZM828 420L840 465H832ZM340 370L350 365 348 405H340ZM497 240L507 265 498 265ZM310 60L330 50 328 88H308ZM810 15H822V40H812ZM590 635L610 640 605 660H590ZM940 310L952 320 942 328ZM0 190L15 205 0 220ZM683 565L692 592H685Z"/>
<path class="tan" d="M360 525L400 515 415 530 410 565 375 572 358 560ZM925 400L960 395 960 440H930ZM950 710L1000 700 1018 820 970 820 945 795ZM490 660L560 645 555 680 530 682ZM325 395L338 410 320 435 308 425ZM710 145L720 150 718 175H705ZM860 700L870 735 858 725ZM1410 400L1422 390 1540 570 1558 630 1520 620 1520 580ZM1535 180H1552L1545 560 1525 580ZM510 770L535 765 530 790H512ZM620 705L635 705 632 728ZM195 830L205 830 203 855H195ZM920 450L928 455 925 478ZM758 535L772 535 768 545ZM525 480L537 485 533 503ZM625 562L645 560 643 572ZM215 395L230 365 235 375 225 398ZM240 325L252 315 248 330ZM1170 490L1185 490V510H1170ZM45 100L58 90 55 110ZM80 160L92 165 85 185Z"/>
<path class="yel" d="M455 375L480 375 478 395 462 398ZM460 345L470 340V365Z"/>
<path class="water" d="M1007 195L1020 170 1045 170 1045 205 1095 270 1115 230 1150 225 1210 260 1245 320 1265 390 1268 500 1240 590 1195 615 1100 615 1050 580 1020 560 1040 540 1020 500 1015 430 998 385 1005 380 1035 420 1030 490 1060 515 1105 460 1110 470 1065 530 1100 590 1190 575 1235 500 1230 460 1200 430 1150 380 1100 320 1060 260Z"/><path class="park" d="M1135 290L1170 270 1210 300 1252 430 1250 445 1225 460 1180 400 1140 350Z"/>
<path class="water" d="M1240 310L1260 335 1248 330ZM300 730L345 650 360 660 310 745ZM362 655L400 710 430 710 460 670 440 700 410 722 390 715Z"/>
<path class="thin" d="M145 570L235 520M150 590L240 525"/>
<path class="rd" d="M0 50L70 130 340 405M0 100L350 490M0 160L130 280M120 100L330 330M30 190L90 110M90 310L200 140M140 350L290 110M240 430L310 320M290 115L500 162 540 155 600 110 760 0M480 30L500 165 470 650M310 110L370 700 380 740M440 0L490 60M620 0L660 820M735 0L800 630M860 0L920 620M860 60L1180 560M475 330L955 238 1010 180 1110 50M800 320L975 285 1005 245M475 590L970 490M550 20L760 0M150 350L250 500 315 640 330 740M0 805L160 780 470 720 530 725 700 660 820 640 1040 625M545 805L600 795 680 765 730 790M730 655L740 795 960 760M730 680L790 675 870 705H1000M110 880L180 890 240 875M240 870L300 830 370 825 440 830 510 848 540 835 560 720 570 610M455 700L470 655M680 560L690 650M650 560L660 820M1500 680L1568 670M440 480L470 500M1090 1200L1150 1165 1310 1160M370 640L375 740M630 630L660 655 690 655M550 640L580 620 740 590 740 610"/>
<path class="maj" d="M350 0L240 190 145 350M290 100L555 45 760 0M550 0L595 410 560 720M1310 1163L1400 1120 1568 1045"/>
<path class="hw2" d="M0 230L100 330 170 370 220 450 250 540 290 605 350 645 430 662 480 655 550 630 700 605 790 617 860 608 980 578 1090 625 1160 632 1220 615 1290 550 1310 460 1305 380 1330 310 1400 240 1420 180 1448 0M1110 0L1320 350 1568 755"/>
</svg>

<!-- Rockaways -->
<svg x="2120" y="790" width="724" height="410" viewBox="0 0 1568 1230" preserveAspectRatio="none">
<path class="water" d="M0 0H1568V1230H0Z"/>
<path class="land" d="M480 0H450L415 35 415 85 428 95 440 70 480 40ZM0 990L130 980 200 920 320 800 440 690 500 675 620 680 620 660 750 630 780 580 820 552 835 560 900 510 960 450 990 415 1030 440 1070 430 1045 330 1065 300 1230 280 1290 240 1355 220 1370 310 1400 230 1418 228 1435 300 1510 310 1533 320V463L1440 475 1300 520 1000 635 960 645 870 700 700 780 500 895 310 1025 240 1050 0 1180ZM870 0H880L910 90 905 130 875 150 865 300 840 360 780 360 765 350 762 310 775 285 800 300 850 130 825 125 855 60ZM920 165H935L970 200 980 250 962 295 940 250 920 215ZM1462 0H1533V330L1480 270 1478 190 1500 50ZM20 680L80 640 85 660 135 610 100 715 60 740 20 755Z"/>
<path fill="url(#sa)" d="M1050 330L1230 320 1400 240 1533 320V430L1280 450 1090 530 1070 440ZM1490 50L1533 20V240L1490 190ZM860 60H900V120H860Z"/><path fill="url(#sb)" d="M280 880L440 720 700 650 960 480 1090 450 1080 570 720 750 310 1000Z"/>
<path class="park" d="M0 143L45 138 65 165 62 230 80 290 95 420 115 560 137 610 85 660 80 620 45 650 50 690 20 705 25 760 0 760ZM0 1000L120 980 260 870 290 850 305 855 275 885 292 970 280 1010 190 1065 150 1060 110 1120 0 1170ZM1330 110L1380 45 1430 45 1420 160 1380 250 1335 230 1290 240ZM1185 270L1230 240 1265 195 1280 190 1250 240 1220 285ZM1250 270L1290 250 1330 240 1332 310 1250 315ZM1012 385L1035 370 1055 385 1055 420 1035 440 1012 410ZM805 270L835 275 845 370 800 370ZM752 600L790 570 780 600 755 610ZM730 725L850 670 1040 590 1240 520 1240 530 960 630 750 730 735 740ZM1478 250L1505 238 1533 280 1520 320 1475 315ZM1205 360L1225 355 1225 375ZM985 470L990 450 1005 465ZM1265 400L1275 410V435H1267Z"/>
<path class="wet" d="M530 0H640L630 50 605 95 580 90 595 120 585 155 555 165 545 130 535 150 510 145 515 120 485 115 530 80ZM660 125L705 55 718 115 700 130ZM340 205L360 215 410 220 445 240 455 280 470 290 455 310 445 330 405 350 365 345 320 295 312 255ZM565 395L595 360 625 343 665 370 660 390 673 410 630 478 625 430 600 425ZM672 350L715 315 740 325 745 312 758 350 750 370 710 382 678 375ZM812 0H845L840 25ZM880 0H915L918 80 905 110 895 60 880 45ZM1285 480L1400 450 1530 450V455L1400 465 1285 500ZM1480 190L1505 200 1505 235 1480 250Z"/>
<path class="water" d="M1335 310L1345 260 1370 245 1385 265 1410 240 1400 290 1360 330ZM1220 330L1245 320 1250 370 1235 385 1222 375Z"/>
<path class="rd" d="M290 975L480 840 620 740 740 680 830 620 990 490M740 725L930 630 1020 580 1100 570V520M870 540L890 560 910 635M870 500L910 630M1100 470L1120 430 1220 420M210 930L240 920 250 880M240 1000L260 968 290 975 250 1000M0 1040L65 1010M130 1010L145 1040H185M0 665L35 650 30 610 70 580H90L95 615 50 650M690 670L880 560 980 490M750 660L890 580M1490 0L1533 45"/>
<path class="maj" d="M840 580L950 550 1030 540 1100 510 1200 455 1240 440 1310 445 1460 415 1515 370 1533 365M1100 460L1120 430 1215 420 1275 380 1533 350M185 1045L240 1005M870 0L860 140 845 350 870 510 910 630M865 490V560L750 620M990 490L1010 470 1090 480M1515 370L1533 300"/>
<path class="hw2" d="M0 760L75 980 95 1012 110 1008 200 930 310 830 450 690 510 680 540 688 630 682 740 630 850 565 940 482 990 480"/>
<path class="teeth" d="M838 130V260"/>
</svg>

<g class="city">
<text x="174" y="397" textLength="132" class="xl">Elizabeth</text><text x="2" y="718" textLength="84" class="lg">Linden</text>
<text x="708" y="475" textLength="126">Port Johnson</text><text x="7" y="927" textLength="94">t Carteret</text><text x="89" y="1060" textLength="98" class="mid">Carteret</text>
</g>
<g class="bay"><text x="1113" y="398" textLength="137">Upper New</text><text x="1126" y="430" textLength="111">York Bay</text></g>
<g class="hood">
<text x="485" y="589" textLength="114">MARINERS</text><text x="497" y="615" textLength="91">HARBOR</text>
<text x="643" y="617" textLength="57">PORT</text><text x="612" y="643" textLength="119">RICHMOND</text>
<text x="358" y="788" textLength="141">BLOOMFIELD</text><text x="880" y="605" textLength="178">TOMPKINSVILLE</text>
<text x="971" y="730" textLength="94">CLIFTON</text><text x="799" y="760" textLength="127">SUNNYSIDE</text>
<text x="1074" y="803" textLength="55">FORT</text><text x="1031" y="828" textLength="142">WADSWORTH</text>
<text x="1379" y="532" textLength="88">SUNSET</text><text x="1394" y="557" textLength="58">PARK</text>
<text x="1324" y="624" textLength="116">BAY RIDGE</text><text x="1695" y="500" textLength="131">BROOKLYN</text>
<text x="1990" y="549" textLength="110">CANARSIE</text><text x="1965" y="716" textLength="89">BERGEN</text><text x="1973" y="741" textLength="73">BEACH</text>
<text x="1466" y="771" textLength="49">NEW</text><text x="1442" y="796" textLength="98">UTRECHT</text><text x="1424" y="864" textLength="166">BENSONHURST</text>
<text x="281" y="880" textLength="101">CHELSEA</text><text x="311" y="1146" textLength="142">FRESH KILLS</text><text x="329" y="1171" textLength="106">LANDFILL</text>
<text x="548" y="998" textLength="94">STATEN</text><text x="549" y="1024" textLength="91">ISLAND</text>
<text x="733" y="1084" textLength="117">NEW DORP</text><text x="737" y="1160" textLength="108">OAKWOOD</text><text x="1371" y="1067" textLength="106">SEA GATE</text>
<text x="1517" y="1057" textLength="73">CONEY</text><text x="1513" y="1083" textLength="80">ISLAND</text>
<text x="2310" y="1043" textLength="78">BELLE</text><text x="2299" y="1070" textLength="100">HARBOR</text><text x="2415" y="1014" textLength="104">SEASIDE</text>
<text x="2595" y="961" textLength="115">ARVERNE</text><text x="2566" y="898" textLength="156">SOMERVILLE</text>
</g>
<g class="airport"><text x="2635" y="572" textLength="172">John F. Kennedy</text><text x="2613" y="598" textLength="216" lengthAdjust="spacingAndGlyphs">International Airport</text></g>
<g class="green"><use href="#tree" x="377" y="1038" width="26" height="28"/><text x="311" y="1092" textLength="157">Freshkills Park</text><use href="#tree" x="2106" y="1140" width="26" height="28"/><text x="2029" y="1195" textLength="177">Gateway National</text></g>

<g class="teal"><use href="#pin" x="1301" y="459" width="54" height="82"/><use href="#pin" x="1563" y="871" width="54" height="82"/></g>
<g class="blue"><use href="#pin" x="1427" y="449" width="54" height="82"/><use href="#pin" x="1559" y="467" width="54" height="82"/></g>
<ellipse cx="1534" cy="766.500" rx="21" ry="10.500" fill="url(#shade)"/>
<g class="gold"><use href="#pin" x="1415" y="579" width="54" height="82"/><use href="#pin" x="1507" y="697" width="54" height="82"/></g>
<g class="red"><use href="#pin" x="1415" y="747" width="54" height="82"/></g>

<circle cx="45" cy="1155" r="20" fill="#fff" stroke="#aaa79d" stroke-width="3"/>
<path fill="#aaa79d" d="M36 1164V1154A10 10 0 1 1 46 1164Z"/><path fill="#fff" d="M47 1147L49 1152 53 1154 49 1156 47 1160 45 1156 41 1154 45 1152Z"/>
<circle cx="2784" cy="1146" r="24" fill="#fff"/><circle cx="2784" cy="1146" r="14.500"/><circle cx="2784" cy="1139" r="2.600" fill="#fff"/><path fill="#fff" d="M2781 1143.500h5.500v9h1v2.500h-7v-2.500h1v-6h-1z"/>
</svg>
<section class="orgs">
<h2>ORGANIZATIONS</h2>
<p>Below are the organizations currently accepting donations.<br>Click on a links to donate items!</p>
<h3>New Utrecht Reformed</h3>
</section>
</main>
</body>
</html>
```
FILE: styles.css
```css
* { box-sizing: border-box; }
html { background: #fff; }
body {
  margin: 0;
  height: 1600px;
  overflow: hidden;
  padding: 16px 16px 0 10px;
  border-top: 2px solid #5f5d66;
  font-family: Inter, "Open Sans", sans-serif;
  font-feature-settings: "cv11";
  font-weight: 300;
  text-align: center;
}
h1, h2, h3, p { margin: 0; font-weight: 400; white-space: nowrap; }
.banner { height: 160px; background: #def3fc; padding-left: 80px; }
h1 { font-size: 81px; line-height: 160px; letter-spacing: -.4px; color: #e1786b; }
.nav { display: flex; justify-content: center; gap: 30px; height: 100px; padding-left: 20px; line-height: 100px; font-size: 40px; letter-spacing: .8px; color: #3880a5; }
.hint { height: 112px; line-height: 112px; font-size: 32px; font-weight: 300; letter-spacing: .85px; color: #4eacb7; }
.map { display: block; width: 2818px; height: 800px; overflow: hidden; }
.orgs h2 { font-size: 48px; line-height: 72px; margin-top: 40px; letter-spacing: -1.55px; color: #e1786b; }
.orgs p { font-size: 32px; line-height: 48px; margin-top: 40px; font-weight: 300; letter-spacing: 1.08px; color: #d6a251; }
.orgs h3 { font-size: 64px; line-height: 96px; margin-top: 75px; padding-left: 32px; letter-spacing: 1.1px; }

.land { fill: #f6eedd; }
.water { fill: #aeedf4; }
.park { fill: #dcedaf; }
.wet { fill: #e8eec5; }
.yel { fill: #f5f3c7; }
.tan { fill: #efdfbf; }
.blk { fill: #f4e9d6; }
.air { fill: #faf3e6; }
.run { fill: #ede0c4; }
.st { fill: none; stroke: #fcf7ef; stroke-width: 2.6; }
.rd, .maj, .hw2, .hwy, .creek, .creek2, .thin, .bound, .glow, .apr, .run2, .teeth {
  fill: none;
  stroke: #fff;
  stroke-linejoin: round;
  vector-effect: non-scaling-stroke;
}
.rd { stroke-width: 2.2px; }
.maj { stroke-width: 4px; }
.hw2 { stroke-width: 6px; }
.hwy { stroke-width: 10px; }
.creek { stroke: #aeedf4; stroke-width: 4px; }
.creek2 { stroke: #aeedf4; stroke-width: 8px; }
.thin { stroke: #aeedf4; stroke-width: 1.5px; }
.apr { stroke: #ede0c4; stroke-width: 2.5px; }
.run2 { stroke: #ede0c4; stroke-width: 9px; }
.teeth { stroke: #f6eedd; stroke-width: 14px; stroke-dasharray: 3.500px 3px; }
.glow { stroke: #c9e9e8; stroke-width: 8px; opacity: .6; }
.bound { stroke: #a59a93; stroke-width: 3.2px; stroke-dasharray: 19px 3px 6px 3px; }
.plane { fill: #b9a986; }

.map text {
  font-family: Roboto, "Liberation Sans", sans-serif;
  font-feature-settings: normal;
  font-size: 20.5px;
  font-weight: 400;
  paint-order: stroke;
  stroke: #faf5ea;
  stroke-width: 3px;
  stroke-linejoin: round;
}
.hood { fill: #b5a184; }
.city { fill: #7f6b50; }
.map .city text { font-size: 22px; }
.map .city .xl { font-size: 30px; font-weight: 500; }
.map .city .lg { font-size: 28px; font-weight: 500; }
.map .city .mid { font-size: 26px; }
.bay { fill: #7fdae9; font-style: italic; }
.map .bay text { stroke: none; font-size: 24px; }
.airport { fill: #b9a986; }
.map .airport text { font-size: 23px; font-weight: 500; stroke: #fff; }
.green { fill: #8f9f68; }
.map .green text { font-size: 23px; font-weight: 500; }
.teal { color: #4eacb7; }
.blue { color: #3880a5; }
.gold { color: #d6a251; }
.red { color: #e1786b; }
```
